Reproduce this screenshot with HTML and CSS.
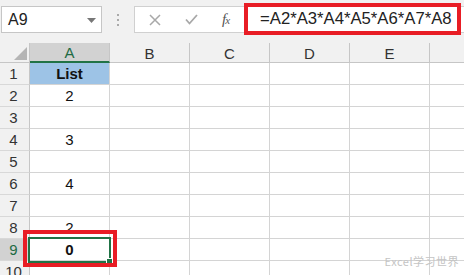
FILE: index.html
```html
<!DOCTYPE html>
<html>
<head>
<meta charset="utf-8">
<link rel="stylesheet" href="styles.css">
</head>
<body>
<div class="app">
  <div class="toolbar">
    <div class="namebox">
      <span class="name">A9</span>
      <svg class="caret" width="9" height="5" viewBox="0 0 9 5"><polygon points="0,0 9,0 4.5,5" fill="#777"/></svg>
    </div>
    <div class="grip">
      <svg width="3" height="12" viewBox="0 0 3 12"><rect x="0" y="0" width="2" height="2" fill="#aaa"/><rect x="0" y="5" width="2" height="2" fill="#aaa"/><rect x="0" y="10" width="2" height="2" fill="#aaa"/></svg>
    </div>
    <div class="formulabar">
      <div class="fbtns">
        <svg width="12" height="12" viewBox="0 0 12 12"><path d="M1 1 L11 11 M11 1 L1 11" stroke="#a8a8a8" stroke-width="1.5" fill="none"/></svg>
        <svg width="13" height="11" viewBox="0 0 13 11"><path d="M1 5.5 L4.5 9.5 L12 1" stroke="#a8a8a8" stroke-width="1.8" fill="none"/></svg>
        <span class="fx"><i>f</i><i class="x">x</i></span>
      </div>
      <div class="formula">=A2*A3*A4*A5*A6*A7*A8</div>
    </div>
  </div>
  <div class="sheet">
    <div class="grid">
      <div class="corner"><svg width="13" height="13" viewBox="0 0 13 13"><polygon points="13,0 13,13 0,13" fill="#b5b5b5"/></svg></div>
      <div class="ch sel">A</div>
      <div class="ch">B</div>
      <div class="ch">C</div>
      <div class="ch">D</div>
      <div class="ch">E</div>
      <div class="ch"></div>

      <div class="rh">1</div><div class="c title">List</div><div class="c"></div><div class="c"></div><div class="c"></div><div class="c"></div><div class="c"></div>
      <div class="rh">2</div><div class="c">2</div><div class="c"></div><div class="c"></div><div class="c"></div><div class="c"></div><div class="c"></div>
      <div class="rh">3</div><div class="c"></div><div class="c"></div><div class="c"></div><div class="c"></div><div class="c"></div><div class="c"></div>
      <div class="rh">4</div><div class="c">3</div><div class="c"></div><div class="c"></div><div class="c"></div><div class="c"></div><div class="c"></div>
      <div class="rh">5</div><div class="c"></div><div class="c"></div><div class="c"></div><div class="c"></div><div class="c"></div><div class="c"></div>
      <div class="rh">6</div><div class="c">4</div><div class="c"></div><div class="c"></div><div class="c"></div><div class="c"></div><div class="c"></div>
      <div class="rh">7</div><div class="c"></div><div class="c"></div><div class="c"></div><div class="c"></div><div class="c"></div><div class="c"></div>
      <div class="rh">8</div><div class="c">2</div><div class="c"></div><div class="c"></div><div class="c"></div><div class="c"></div><div class="c"></div>
      <div class="rh sel">9</div><div class="c bold">0</div><div class="c"></div><div class="c"></div><div class="c"></div><div class="c"></div><div class="c"></div>
      <div class="rh">10</div><div class="c"></div><div class="c"></div><div class="c"></div><div class="c"></div><div class="c"></div><div class="c"></div>
    </div>
    <div class="selection"><span class="handle"></span></div>
    <div class="mark"></div>
  </div>
  <div class="watermark">Excel学习世界</div>
</div>
</body>
</html>
```

FILE: styles.css
```css
html, body {
  margin: 0;
  padding: 0;
}
body {
  background: #ffffff;
  font-family: "Liberation Sans", Arial, sans-serif;
}
.app {
  position: relative;
  width: 464px;
  height: 275px;
  overflow: hidden;
  background: #ffffff;
}
.toolbar {
  height: 43px;
  box-sizing: border-box;
  background: #f1f1f1;
  display: flex;
  align-items: flex-start;
  padding: 6px 0 0 1px;
}
.namebox {
  width: 101px;
  height: 27px;
  box-sizing: border-box;
  background: #fff;
  border: 1px solid #c6c6c6;
  display: flex;
  align-items: center;
  justify-content: space-between;
  padding: 0 5px 0 6px;
}
.name {
  font-size: 16px;
  color: #222;
}
.caret {
  margin-top: 1px;
}
.grip {
  width: 32px;
  height: 27px;
  display: flex;
  align-items: center;
  justify-content: center;
}
.formulabar {
  flex: 1;
  height: 27px;
  background: #fff;
  border: 1px solid #d0d0d0;
  border-right: none;
  box-sizing: border-box;
  display: flex;
  align-items: center;
}
.fbtns {
  width: 109px;
  display: flex;
  align-items: center;
  gap: 24px;
  padding-left: 14px;
  box-sizing: border-box;
}
.fx {
  font-family: "Liberation Serif", "Times New Roman", serif;
  font-size: 15px;
  color: #555;
  letter-spacing: -1px;
}
.fx .x {
  font-size: 11px;
}
.formula {
  margin: -4px 3px -3px 0;
  height: 32px;
  flex: 1;
  box-sizing: border-box;
  border: 4px solid #e81d25;
  background: #fff;
  display: flex;
  align-items: center;
  padding-left: 12px;
  font-size: 16.7px;
  color: #222;
  white-space: nowrap;
}
.sheet {
  position: relative;
}
.grid {
  display: grid;
  grid-template-columns: 30px repeat(6, 80px);
  grid-template-rows: 20px repeat(10, 22px);
}
.corner {
  background: #f1f1f1;
  border-right: 1px solid #c6c6c6;
  border-bottom: 1px solid #c6c6c6;
  box-sizing: border-box;
  display: flex;
  align-items: flex-end;
  justify-content: flex-end;
  padding: 0 2px 2px 0;
}
.ch {
  background: #f1f1f1;
  border-right: 1px solid #c6c6c6;
  border-bottom: 1px solid #c6c6c6;
  box-sizing: border-box;
  display: flex;
  align-items: center;
  justify-content: center;
  font-size: 15px;
  color: #333;
  padding-top: 1px;
}
.ch.sel {
  background: #d2d2d2;
  color: #1e6b44;
  border-bottom: 2px solid #217346;
}
.rh {
  background: #f1f1f1;
  border-right: 1px solid #c6c6c6;
  border-bottom: 1px solid #d8d8d8;
  box-sizing: border-box;
  display: flex;
  align-items: center;
  justify-content: center;
  font-size: 15px;
  color: #333;
  padding-right: 2px;
}
.rh.sel {
  background: #d2d2d2;
  color: #1e6b44;
}
.c {
  border-right: 1px solid #d4d4d4;
  border-bottom: 1px solid #d4d4d4;
  box-sizing: border-box;
  display: flex;
  align-items: center;
  justify-content: center;
  font-size: 15px;
  color: #111;
}
.c.title {
  background: #9dc3e6;
  font-weight: bold;
}
.c.bold {
  font-weight: bold;
}
.selection {
  position: absolute;
  left: 28px;
  top: 194px;
  width: 83px;
  height: 26px;
  box-sizing: border-box;
  border: 2px solid #217346;
}
.handle {
  position: absolute;
  right: -4px;
  bottom: -4px;
  width: 5px;
  height: 5px;
  background: #217346;
  border: 1px solid #fff;
}
.mark {
  position: absolute;
  left: 23px;
  top: 187px;
  width: 94px;
  height: 37px;
  box-sizing: border-box;
  border: 4px solid #e81d25;
}
.watermark {
  position: absolute;
  right: 5px;
  bottom: 6px;
  font-family: "Noto Sans CJK SC", sans-serif;
  font-size: 11px;
  color: #c4c4c4;
  letter-spacing: 0.5px;
}
```
